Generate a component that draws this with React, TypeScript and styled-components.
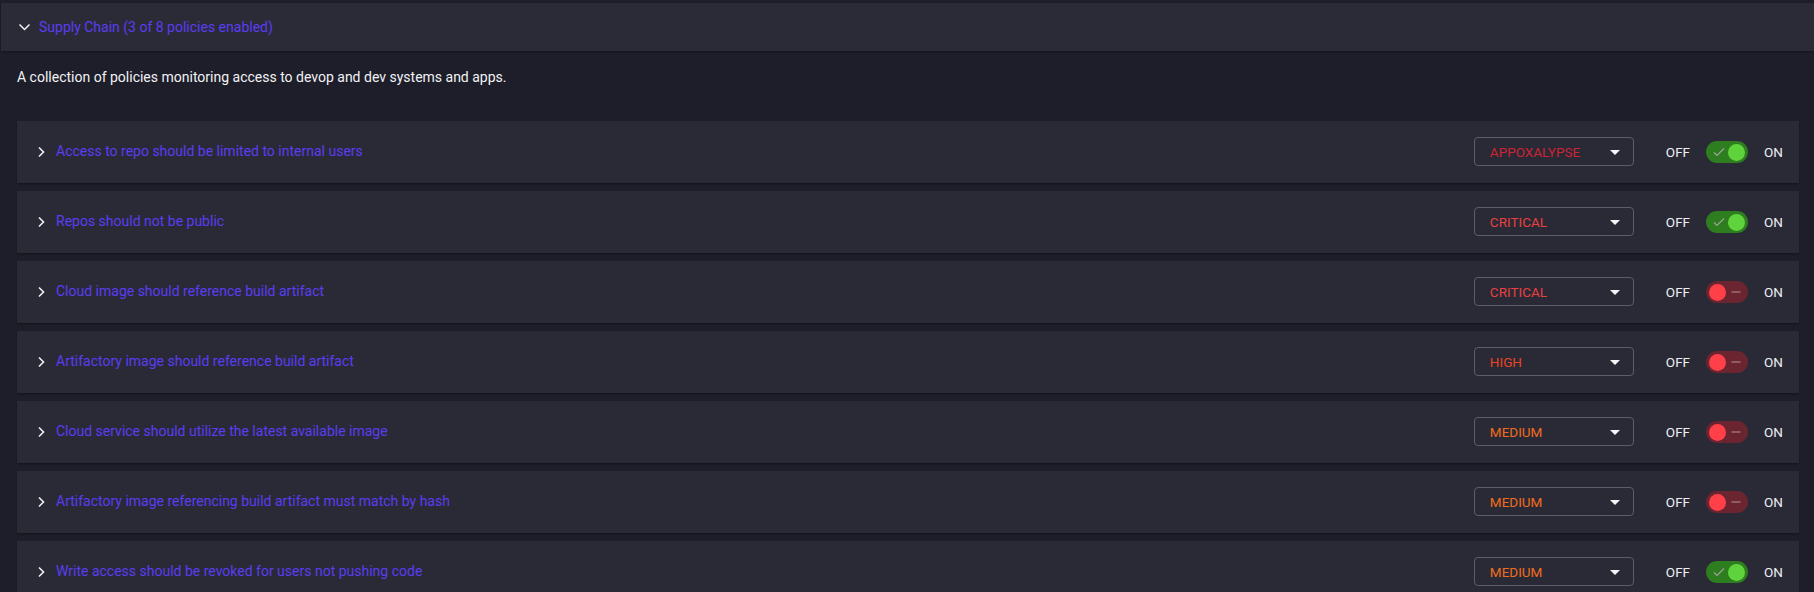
import React from 'react';
import styled, { createGlobalStyle } from 'styled-components';

const GlobalStyle = createGlobalStyle`
  html, body {
    margin: 0;
    padding: 0;
    background: #1d1e29;
    font-family: Roboto, "Liberation Sans", sans-serif;
  }
`;

type Severity = 'APPOXALYPSE' | 'CRITICAL' | 'HIGH' | 'MEDIUM';

const severityColors: Record<Severity, string> = {
  APPOXALYPSE: '#cc2333',
  CRITICAL: '#e8403f',
  HIGH: '#e84523',
  MEDIUM: '#f26b1d',
};

const policies: { title: string; severity: Severity; enabled: boolean }[] = [
  { title: 'Access to repo should be limited to internal users', severity: 'APPOXALYPSE', enabled: true },
  { title: 'Repos should not be public', severity: 'CRITICAL', enabled: true },
  { title: 'Cloud image should reference build artifact', severity: 'CRITICAL', enabled: false },
  { title: 'Artifactory image should reference build artifact', severity: 'HIGH', enabled: false },
  { title: 'Cloud service should utilize the latest available image', severity: 'MEDIUM', enabled: false },
  { title: 'Artifactory image referencing build artifact must match by hash', severity: 'MEDIUM', enabled: false },
  { title: 'Write access should be revoked for users not pushing code', severity: 'MEDIUM', enabled: true },
];

const Page = styled.div`
  padding-top: 3px;
  height: 589px;
  overflow: hidden;
`;

const SectionHeader = styled.div`
  display: flex;
  align-items: center;
  height: 48px;
  margin-left: 1px;
  padding-left: 17px;
  background: #2a2b37;
  box-shadow: 0 1px 2px rgba(0, 0, 0, 0.35);
  gap: 8px;
`;

const SectionTitle = styled.span`
  color: #5b3df2;
  font-size: 14px;
`;

const Description = styled.p`
  margin: 0;
  padding: 18px 17px 0;
  height: 52px;
  box-sizing: border-box;
  line-height: 16px;
  color: #f2f2f5;
  font-size: 14px;
`;

const List = styled.div`
  display: flex;
  flex-direction: column;
  gap: 8px;
  padding: 18px 15px 0 17px;
`;

const Row = styled.div`
  display: flex;
  align-items: center;
  height: 62px;
  flex-shrink: 0;
  padding: 0 16px 0 20px;
  background: #292a36;
  box-shadow: 0 1px 2px rgba(0, 0, 0, 0.4);
`;

const RowTitle = styled.span`
  flex: 1;
  margin-left: 11px;
  margin-top: -2px;
  color: #5b3df2;
  font-size: 14px;
`;

const Select = styled.div<{ $color: string }>`
  display: flex;
  align-items: center;
  justify-content: space-between;
  width: 160px;
  height: 29px;
  box-sizing: border-box;
  margin-top: -1px;
  padding: 0 13px 0 15px;
  border: 1px solid #5c5d68;
  border-radius: 4px;
  color: ${p => p.$color};
  font-size: 13.5px;
`;

const Caret = styled.span`
  width: 0;
  height: 0;
  border-left: 5px solid transparent;
  border-right: 5px solid transparent;
  border-top: 5px solid #f5f5f7;
  margin-top: 2px;
`;

const SwitchLabel = styled.span`
  color: #eeeef2;
  font-size: 13.5px;
  font-weight: 400;
`;

const SwitchGroup = styled.div`
  display: flex;
  align-items: center;
  margin-left: 32px;
  gap: 16px;
`;

const Track = styled.div<{ $on: boolean }>`
  position: relative;
  width: 42px;
  height: 22px;
  border-radius: 11px;
  background: ${p => (p.$on ? '#2e7d1e' : '#6a2530')};
`;

const Knob = styled.div<{ $on: boolean }>`
  position: absolute;
  top: 2.5px;
  left: ${p => (p.$on ? '22px' : '3px')};
  width: 17px;
  height: 17px;
  border-radius: 50%;
  background: ${p => (p.$on ? '#5fd33c' : '#ff4048')};
`;

const TrackMark = styled.svg<{ $on: boolean }>`
  position: absolute;
  top: 6px;
  left: ${p => (p.$on ? '7px' : '25px')};
`;

const ChevronDown = () => (
  <svg width="13" height="12" viewBox="0 0 13 12">
    <path d="M1.5 3.5l5 5 5-5" fill="none" stroke="#f0f0f3" strokeWidth="1.5" />
  </svg>
);

const ChevronRight = () => (
  <svg width="8" height="12" viewBox="0 0 8 12">
    <path d="M2 1.5L6.5 6L2 10.5" fill="none" stroke="#f0f0f3" strokeWidth="1.6" />
  </svg>
);

const Toggle = ({ on }: { on: boolean }) => (
  <Track $on={on}>
    {on ? (
      <TrackMark $on={on} width="12" height="10" viewBox="0 0 12 10">
        <path d="M1 5.5l3 3L11 1.5" fill="none" stroke="#9aa39a" strokeWidth="1.2" />
      </TrackMark>
    ) : (
      <TrackMark $on={on} width="10" height="10" viewBox="0 0 10 10">
        <path d="M0.5 5h9" stroke="#9b6a70" strokeWidth="1.6" />
      </TrackMark>
    )}
    <Knob $on={on} />
  </Track>
);

const App = () => {
  const enabledCount = 3;
  return (
    <>
      <GlobalStyle />
      <Page>
        <SectionHeader>
          <ChevronDown />
          <SectionTitle>Supply Chain ({enabledCount} of 8 policies enabled)</SectionTitle>
        </SectionHeader>
        <Description>A collection of policies monitoring access to devop and dev systems and apps.</Description>
        <List>
          {policies.map((policy, index) => (
            <Row key={index}>
              <ChevronRight />
              <RowTitle>{policy.title}</RowTitle>
              <Select $color={severityColors[policy.severity]}>
                {policy.severity}
                <Caret />
              </Select>
              <SwitchGroup>
                <SwitchLabel>OFF</SwitchLabel>
                <Toggle on={policy.enabled} />
                <SwitchLabel>ON</SwitchLabel>
              </SwitchGroup>
            </Row>
          ))}
        </List>
      </Page>
    </>
  );
};

export default App;
